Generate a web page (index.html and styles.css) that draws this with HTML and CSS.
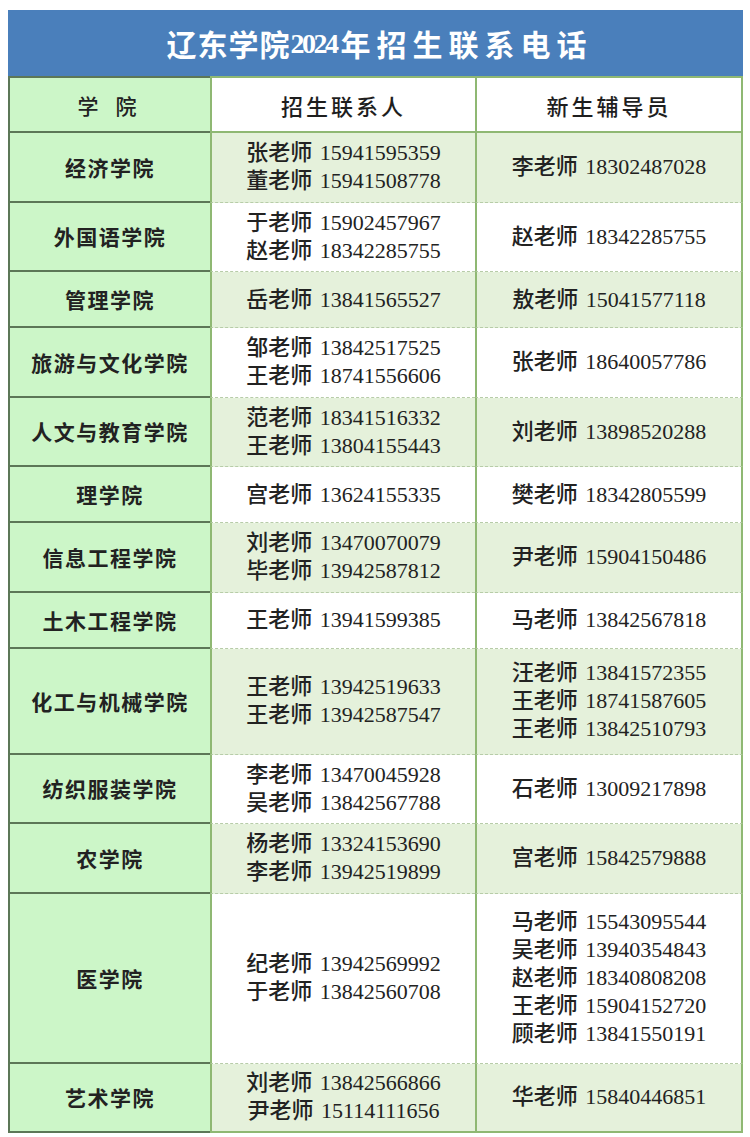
FILE: index.html
```html
<!DOCTYPE html>
<html lang="zh-CN">
<head>
<meta charset="utf-8">
<title>辽东学院2024年招生联系电话</title>
<link rel="stylesheet" href="styles.css">
</head>
<body>
<div class="sheet">
  <div class="title"><span class="t-a">辽东学院</span><span class="t-num">2024</span><span class="t-b">年招生联系电话</span></div>
  <table class="grid">
    <colgroup><col class="w1"><col class="w2"><col class="w3"></colgroup>
    <thead>
      <tr class="h-head">
        <th class="c1 hd-college">学 院</th>
        <th class="c2 hd">招生联系人</th>
        <th class="c3 hd">新生辅导员</th>
      </tr>
    </thead>
    <tbody>
      <tr class="r2 alt">
        <td class="c1">经济学院</td>
        <td class="c2"><p class="ln">张老师 <span class="num">15941595359</span></p><p class="ln">董老师 <span class="num">15941508778</span></p></td>
        <td class="c3"><p class="ln">李老师 <span class="num">18302487028</span></p></td>
      </tr>
      <tr class="r2">
        <td class="c1">外国语学院</td>
        <td class="c2"><p class="ln">于老师 <span class="num">15902457967</span></p><p class="ln">赵老师 <span class="num">18342285755</span></p></td>
        <td class="c3"><p class="ln">赵老师 <span class="num">18342285755</span></p></td>
      </tr>
      <tr class="r1 alt">
        <td class="c1">管理学院</td>
        <td class="c2"><p class="ln">岳老师 <span class="num">13841565527</span></p></td>
        <td class="c3"><p class="ln">敖老师 <span class="num">15041577118</span></p></td>
      </tr>
      <tr class="r2">
        <td class="c1">旅游与文化学院</td>
        <td class="c2"><p class="ln">邹老师 <span class="num">13842517525</span></p><p class="ln">王老师 <span class="num">18741556606</span></p></td>
        <td class="c3"><p class="ln">张老师 <span class="num">18640057786</span></p></td>
      </tr>
      <tr class="r2 alt">
        <td class="c1">人文与教育学院</td>
        <td class="c2"><p class="ln">范老师 <span class="num">18341516332</span></p><p class="ln">王老师 <span class="num">13804155443</span></p></td>
        <td class="c3"><p class="ln">刘老师 <span class="num">13898520288</span></p></td>
      </tr>
      <tr class="r1">
        <td class="c1">理学院</td>
        <td class="c2"><p class="ln">宫老师 <span class="num">13624155335</span></p></td>
        <td class="c3"><p class="ln">樊老师 <span class="num">18342805599</span></p></td>
      </tr>
      <tr class="r2 alt">
        <td class="c1">信息工程学院</td>
        <td class="c2"><p class="ln">刘老师 <span class="num">13470070079</span></p><p class="ln">毕老师 <span class="num">13942587812</span></p></td>
        <td class="c3"><p class="ln">尹老师 <span class="num">15904150486</span></p></td>
      </tr>
      <tr class="r1">
        <td class="c1">土木工程学院</td>
        <td class="c2"><p class="ln">王老师 <span class="num">13941599385</span></p></td>
        <td class="c3"><p class="ln">马老师 <span class="num">13842567818</span></p></td>
      </tr>
      <tr class="r3 alt">
        <td class="c1">化工与机械学院</td>
        <td class="c2"><p class="ln">王老师 <span class="num">13942519633</span></p><p class="ln">王老师 <span class="num">13942587547</span></p></td>
        <td class="c3"><p class="ln">汪老师 <span class="num">13841572355</span></p><p class="ln">王老师 <span class="num">18741587605</span></p><p class="ln">王老师 <span class="num">13842510793</span></p></td>
      </tr>
      <tr class="r2">
        <td class="c1">纺织服装学院</td>
        <td class="c2"><p class="ln">李老师 <span class="num">13470045928</span></p><p class="ln">吴老师 <span class="num">13842567788</span></p></td>
        <td class="c3"><p class="ln">石老师 <span class="num">13009217898</span></p></td>
      </tr>
      <tr class="r2 alt">
        <td class="c1">农学院</td>
        <td class="c2"><p class="ln">杨老师 <span class="num">13324153690</span></p><p class="ln">李老师 <span class="num">13942519899</span></p></td>
        <td class="c3"><p class="ln">宫老师 <span class="num">15842579888</span></p></td>
      </tr>
      <tr class="r5">
        <td class="c1">医学院</td>
        <td class="c2"><p class="ln">纪老师 <span class="num">13942569992</span></p><p class="ln">于老师 <span class="num">13842560708</span></p></td>
        <td class="c3"><p class="ln">马老师 <span class="num">15543095544</span></p><p class="ln">吴老师 <span class="num">13940354843</span></p><p class="ln">赵老师 <span class="num">18340808208</span></p><p class="ln">王老师 <span class="num">15904152720</span></p><p class="ln">顾老师 <span class="num">13841550191</span></p></td>
      </tr>
      <tr class="r2 alt last">
        <td class="c1">艺术学院</td>
        <td class="c2"><p class="ln">刘老师 <span class="num">13842566866</span></p><p class="ln">尹老师 <span class="num">15114111656</span></p></td>
        <td class="c3"><p class="ln">华老师 <span class="num">15840446851</span></p></td>
      </tr>
    </tbody>
  </table>
</div>
</body>
</html>
```

FILE: styles.css
```css
html, body {
  margin: 0;
  padding: 0;
  background: #ffffff;
}

body {
  font-family: "Liberation Serif", "Noto Sans CJK SC", serif;
  color: #222222;
}

.sheet {
  width: 735px;
  margin: 10px 0 0 8px;
}

.title {
  height: 66px;
  background: #4a7fbb;
  color: #ffffff;
  font-weight: 700;
  display: flex;
  align-items: center;
  justify-content: center;
  box-sizing: border-box;
  padding-left: 2px;
}

.t-a {
  font-size: 30px;
  letter-spacing: 1px;
}

.t-num {
  font-size: 28px;
  letter-spacing: -2.5px;
  margin-right: 4px;
  position: relative;
  top: 1px;
}

.t-b {
  font-size: 30px;
  letter-spacing: 6px;
  margin-right: -6px;
}

.grid {
  width: 735px;
  table-layout: fixed;
  border-collapse: separate;
  border-spacing: 0;
}

.w1 { width: 202px; }
.w2 { width: 265px; }
.w3 { width: 268px; }

.grid th,
.grid td {
  padding: 0;
  text-align: center;
  vertical-align: middle;
}

.h-head { height: 57px; }
.r1 { height: 56px; }
.r2 { height: 69.5px; }
.r3 { height: 106px; }
.r5 { height: 170px; }

.c1 {
  background: #ccf6c8;
  border-left: 2px solid #5c7757;
  border-bottom: 2px solid #5c7757;
  font-size: 21px;
  font-weight: 700;
  letter-spacing: 1.5px;
  color: #222222;
}

.h-head .c1 {
  border-top: 2px solid #5c7757;
}

.c2,
.c3 {
  background: #ffffff;
  border-left: 2px solid #8fb873;
  border-bottom: 1px dashed #b7cca8;
  font-size: 22px;
  font-weight: 500;
}

.c3 {
  border-right: 2px solid #8fb873;
}

.alt .c2,
.alt .c3 {
  background: #e5f1db;
}

.h-head .c2,
.h-head .c3 {
  border-top: 2px solid #8fb873;
  border-bottom: 2px solid #8fb873;
}

.last .c2,
.last .c3 {
  border-bottom: 2px solid #8fb873;
}

.hd-college {
  font-size: 21px;
  font-weight: 500;
  letter-spacing: 6px;
  padding-left: 6px;
}

.hd {
  font-size: 22px;
  font-weight: 500;
  letter-spacing: 3px;
  color: #1e1e1e;
}

.ln {
  margin: 0;
  line-height: 28px;
  white-space: nowrap;
}

.num {
  font-size: 22px;
  font-weight: 400;
  margin-left: 2px;
}
```
